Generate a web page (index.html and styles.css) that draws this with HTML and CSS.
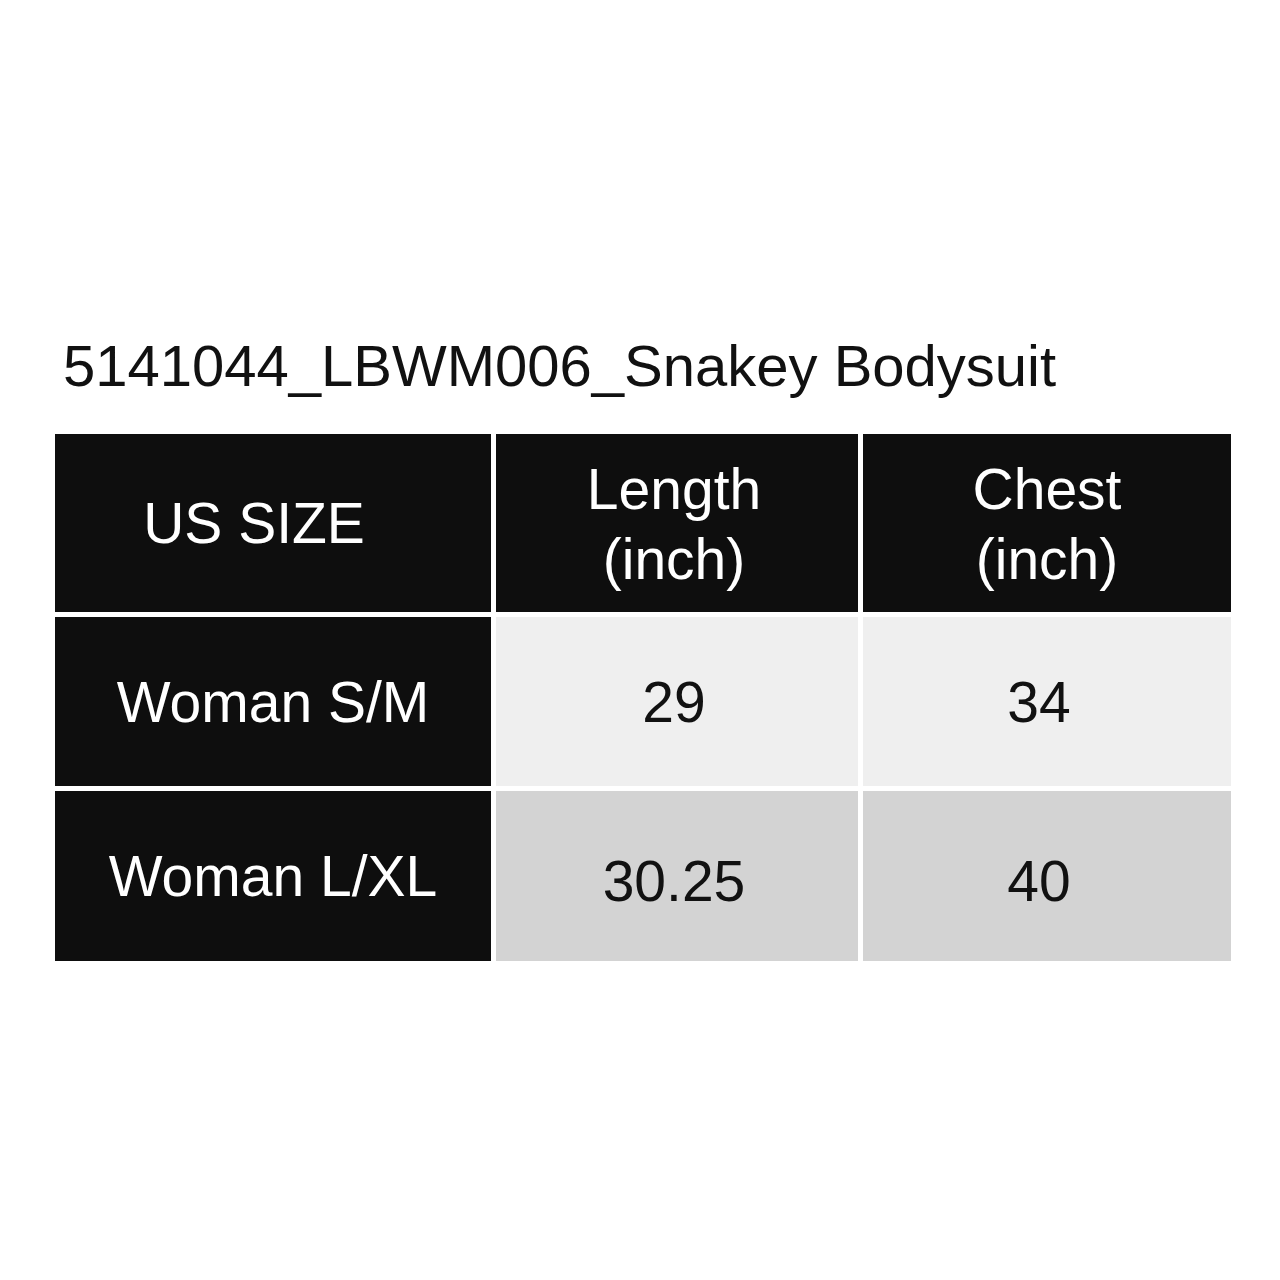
FILE: index.html
```html
<!DOCTYPE html>
<html lang="en">
<head>
<meta charset="utf-8">
<title>5141044_LBWM006_Snakey Bodysuit</title>
<link rel="stylesheet" href="styles.css">
</head>
<body>
<main class="sheet">
  <h1 class="title">5141044_LBWM006_Snakey Bodysuit</h1>
  <div class="table">
    <div class="cell dark head-size">US SIZE</div>
    <div class="cell dark two-line shift-left">Length<br>(inch)</div>
    <div class="cell dark two-line">Chest<br>(inch)</div>

    <div class="cell dark">Woman S/M</div>
    <div class="cell light shift-left">29</div>
    <div class="cell light shift-more">34</div>

    <div class="cell dark">Woman L/XL</div>
    <div class="cell grey shift-left">30.25</div>
    <div class="cell grey shift-more">40</div>
  </div>
</main>
</body>
</html>
```

FILE: styles.css
```css
html, body {
  margin: 0;
  padding: 0;
  background: #ffffff;
}

body {
  width: 1280px;
  height: 1280px;
  font-family: "Liberation Sans", Arial, sans-serif;
}

.sheet {
  padding: 333px 0 0 55px;
}

.title {
  margin: 0 0 35px 8px;
  font-size: 58px;
  font-weight: normal;
  line-height: 66px;
  color: #111111;
  white-space: nowrap;
}

.table {
  display: grid;
  grid-template-columns: 436px 362px 368px;
  grid-template-rows: 178px 169px 170px;
  column-gap: 5px;
  row-gap: 5px;
  width: 1176px;
}

.cell {
  display: flex;
  align-items: center;
  justify-content: center;
  text-align: center;
  font-size: 57px;
  line-height: 70px;
}

.dark {
  background: #0e0e0e;
  color: #ffffff;
}

.light {
  background: #efefef;
  color: #111111;
}

.grey {
  background: #d3d3d3;
  color: #111111;
  padding-top: 10px;
}

.head-size {
  padding-right: 38px;
}

.two-line {
  padding-top: 2px;
}

.shift-left {
  padding-right: 6px;
}

.shift-more {
  padding-right: 16px;
}
```
